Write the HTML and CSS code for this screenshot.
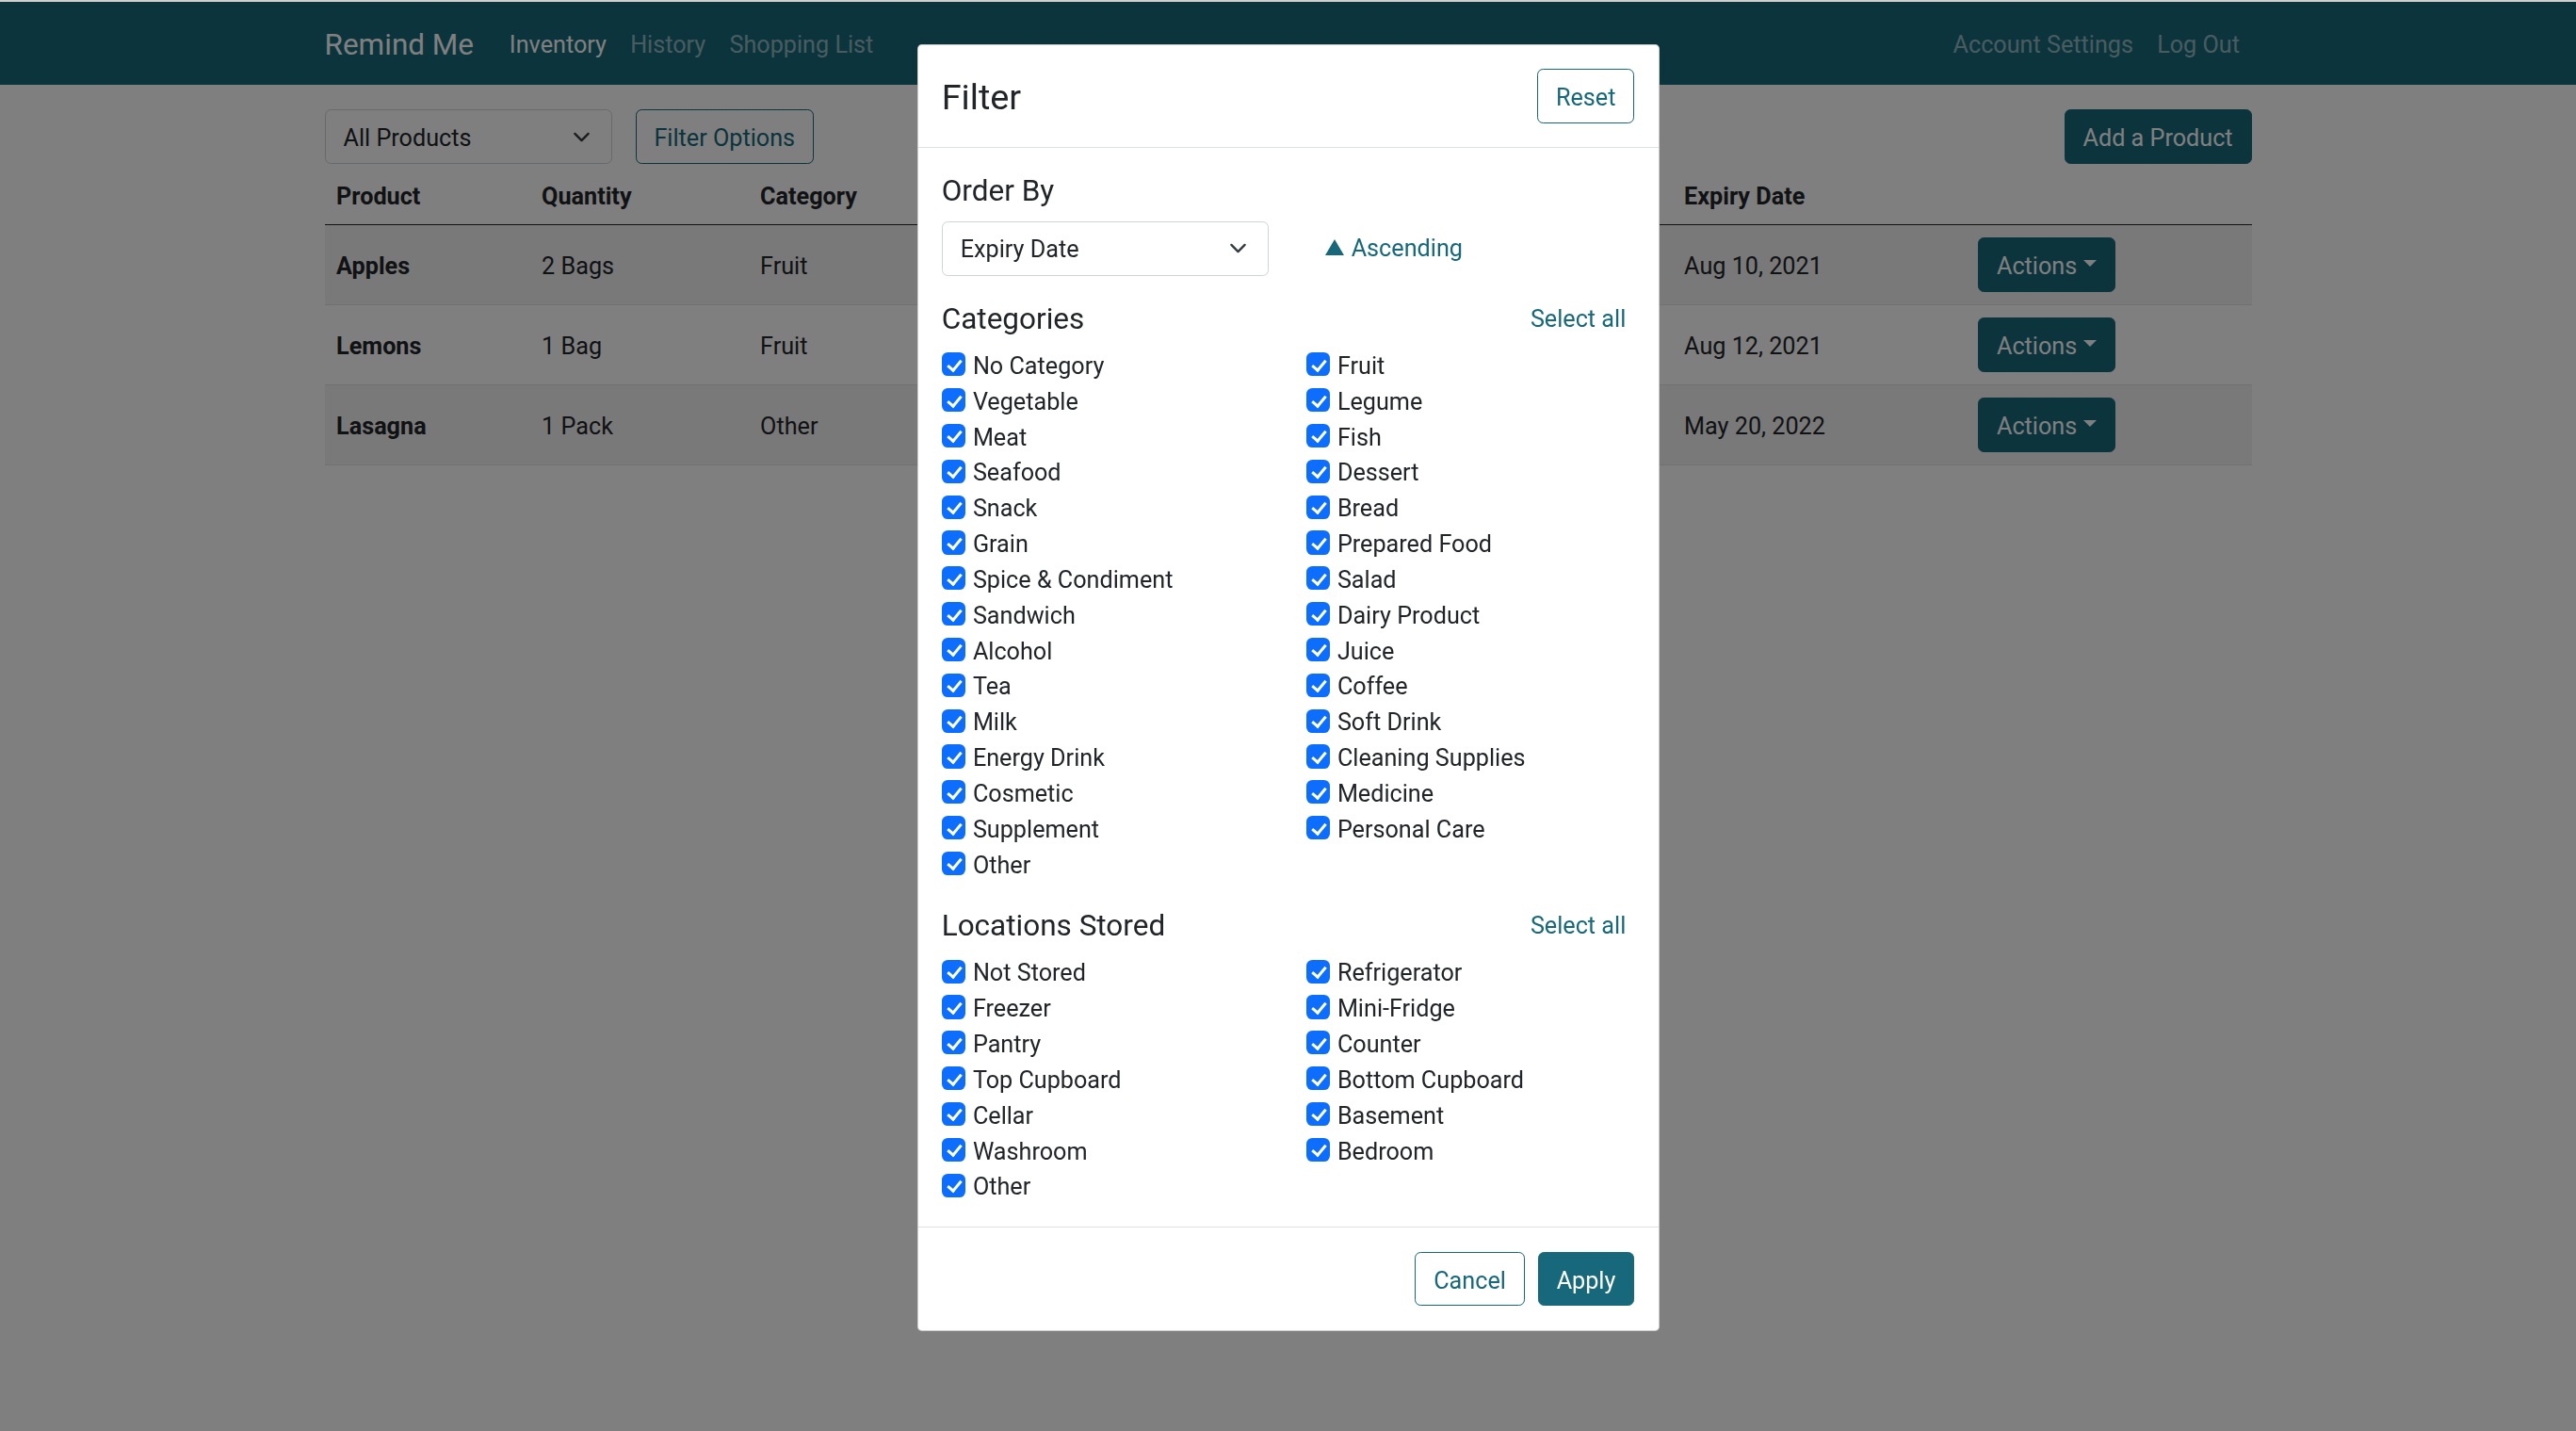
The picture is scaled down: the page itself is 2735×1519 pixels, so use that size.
FILE: index.html
```html
<!DOCTYPE html>
<html lang="en">
<head>
<meta charset="utf-8">
<title>Remind Me - Inventory</title>
<link rel="stylesheet" href="styles.css">
</head>
<body>
<nav class="navbar">
  <div class="container nav-inner">
    <a class="brand">Remind Me</a>
    <div class="nav-links">
      <a class="nav-link active">Inventory</a>
      <a class="nav-link">History</a>
      <a class="nav-link">Shopping List</a>
    </div>
    <div class="nav-links nav-right">
      <a class="nav-link">Account Settings</a>
      <a class="nav-link">Log Out</a>
    </div>
  </div>
</nav>

<main class="container">
  <div class="toolbar">
    <div class="select select-products">
      <span class="select-text">All Products</span>
      <svg class="chev" viewBox="0 0 16 16"><path d="M2 5l6 6 6-6" fill="none" stroke="#343a40" stroke-width="2" stroke-linecap="round" stroke-linejoin="round"/></svg>
    </div>
    <button class="btn btn-outline">Filter Options</button>
    <button class="btn btn-primary btn-add">Add a Product</button>
  </div>

  <table class="table">
    <thead>
      <tr>
        <th class="c-product">Product</th>
        <th class="c-qty">Quantity</th>
        <th class="c-cat">Category</th>
        <th class="c-loc">Location</th>
        <th class="c-added">Date Added</th>
        <th class="c-exp">Expiry Date</th>
        <th class="c-act"></th>
      </tr>
    </thead>
    <tbody>
      <tr>
        <td class="bold">Apples</td><td>2 Bags</td><td>Fruit</td><td>Refrigerator</td><td>Aug 1, 2021</td><td>Aug 10, 2021</td>
        <td><button class="btn btn-primary">Actions<span class="caret"></span></button></td>
      </tr>
      <tr>
        <td class="bold">Lemons</td><td>1 Bag</td><td>Fruit</td><td>Refrigerator</td><td>Aug 2, 2021</td><td>Aug 12, 2021</td>
        <td><button class="btn btn-primary">Actions<span class="caret"></span></button></td>
      </tr>
      <tr>
        <td class="bold">Lasagna</td><td>1 Pack</td><td>Other</td><td>Freezer</td><td>Aug 3, 2021</td><td>May 20, 2022</td>
        <td><button class="btn btn-primary">Actions<span class="caret"></span></button></td>
      </tr>
    </tbody>
  </table>
</main>

<div class="backdrop">
  <div class="modal">
    <div class="modal-header">
      <h4 class="modal-title">Filter</h4>
      <button class="btn btn-outline">Reset</button>
    </div>
    <div class="modal-body">
      <h5 class="section-title">Order By</h5>
      <div class="order-row">
        <div class="select select-order">
          <span class="select-text">Expiry Date</span>
          <svg class="chev" viewBox="0 0 16 16"><path d="M2 5l6 6 6-6" fill="none" stroke="#343a40" stroke-width="2" stroke-linecap="round" stroke-linejoin="round"/></svg>
        </div>
        <a class="asc"><svg class="tri" viewBox="0 0 20 17"><path d="M10 0L20 17H0z" fill="#16687a"/></svg>Ascending</a>
      </div>

      <div class="section-head section-head-first">
        <h5 class="section-title">Categories</h5>
        <a class="select-all">Select all</a>
      </div>
      <div class="checks">
        <div class="check-col">
          <label class="check"><span class="box"></span>No Category</label>
          <label class="check"><span class="box"></span>Vegetable</label>
          <label class="check"><span class="box"></span>Meat</label>
          <label class="check"><span class="box"></span>Seafood</label>
          <label class="check"><span class="box"></span>Snack</label>
          <label class="check"><span class="box"></span>Grain</label>
          <label class="check"><span class="box"></span>Spice &amp; Condiment</label>
          <label class="check"><span class="box"></span>Sandwich</label>
          <label class="check"><span class="box"></span>Alcohol</label>
          <label class="check"><span class="box"></span>Tea</label>
          <label class="check"><span class="box"></span>Milk</label>
          <label class="check"><span class="box"></span>Energy Drink</label>
          <label class="check"><span class="box"></span>Cosmetic</label>
          <label class="check"><span class="box"></span>Supplement</label>
          <label class="check"><span class="box"></span>Other</label>
        </div>
        <div class="check-col">
          <label class="check"><span class="box"></span>Fruit</label>
          <label class="check"><span class="box"></span>Legume</label>
          <label class="check"><span class="box"></span>Fish</label>
          <label class="check"><span class="box"></span>Dessert</label>
          <label class="check"><span class="box"></span>Bread</label>
          <label class="check"><span class="box"></span>Prepared Food</label>
          <label class="check"><span class="box"></span>Salad</label>
          <label class="check"><span class="box"></span>Dairy Product</label>
          <label class="check"><span class="box"></span>Juice</label>
          <label class="check"><span class="box"></span>Coffee</label>
          <label class="check"><span class="box"></span>Soft Drink</label>
          <label class="check"><span class="box"></span>Cleaning Supplies</label>
          <label class="check"><span class="box"></span>Medicine</label>
          <label class="check"><span class="box"></span>Personal Care</label>
        </div>
      </div>

      <div class="section-head">
        <h5 class="section-title">Locations Stored</h5>
        <a class="select-all">Select all</a>
      </div>
      <div class="checks">
        <div class="check-col">
          <label class="check"><span class="box"></span>Not Stored</label>
          <label class="check"><span class="box"></span>Freezer</label>
          <label class="check"><span class="box"></span>Pantry</label>
          <label class="check"><span class="box"></span>Top Cupboard</label>
          <label class="check"><span class="box"></span>Cellar</label>
          <label class="check"><span class="box"></span>Washroom</label>
          <label class="check"><span class="box"></span>Other</label>
        </div>
        <div class="check-col">
          <label class="check"><span class="box"></span>Refrigerator</label>
          <label class="check"><span class="box"></span>Mini-Fridge</label>
          <label class="check"><span class="box"></span>Counter</label>
          <label class="check"><span class="box"></span>Bottom Cupboard</label>
          <label class="check"><span class="box"></span>Basement</label>
          <label class="check"><span class="box"></span>Bedroom</label>
        </div>
      </div>
    </div>
    <div class="modal-footer">
      <button class="btn btn-outline">Cancel</button>
      <button class="btn btn-primary">Apply</button>
    </div>
  </div>
</div>
</body>
</html>
```

FILE: styles.css
```css
* { box-sizing: border-box; }

html, body { margin: 0; padding: 0; }

body {
  font-family: Roboto, "Liberation Sans", Arial, sans-serif;
  font-size: 25.2px;
  line-height: 1.5;
  color: #212529;
  background: #fff;
  border-top: 2px solid #cfcfcf;
}

.container {
  width: 2046px;
  margin: 0 auto;
}

/* Navbar */
.navbar {
  background: #16687a;
  height: 88px;
}
.nav-inner {
  display: flex;
  align-items: center;
  height: 100%;
  padding-top: 3px;
}
.brand {
  font-size: 31.5px;
  color: #fff;
  margin-right: 25.2px;
  line-height: 1.5;
}
.nav-links { display: flex; }
.nav-right { margin-left: auto; }
.nav-link {
  padding: 0 12.6px;
  color: rgba(255, 255, 255, 0.55);
}
.nav-link.active { color: #fff; }

/* Toolbar */
.toolbar {
  display: flex;
  align-items: center;
  gap: 25px;
  margin-top: 26px;
}
.select {
  display: flex;
  align-items: center;
  justify-content: space-between;
  height: 58px;
  border: 1px solid #ced4da;
  border-radius: 6.3px;
  background: #fff;
  padding: 0 19px;
  color: #212529;
}
.select-text { padding-top: 3px; }
.select-products { width: 305px; }
.chev { width: 25px; height: 19px; }

.btn {
  font-family: inherit;
  font-size: 25.2px;
  line-height: 1.5;
  padding: 11px 18.9px 7px;
  border: 1px solid #16687a;
  border-radius: 6.3px;
  cursor: pointer;
  display: inline-flex;
  align-items: center;
}
.btn-outline {
  background: transparent;
  color: #16687a;
}
.btn-primary {
  background: #16687a;
  color: #fff;
}
.btn-add { margin-left: auto; }

.caret {
  display: inline-block;
  margin-left: 6.4px;
  border-top: 7.5px solid #fff;
  border-left: 7.5px solid transparent;
  border-right: 7.5px solid transparent;
  transform: translateY(-3px);
}

/* Table */
.table {
  width: 100%;
  border-collapse: collapse;
  table-layout: fixed;
  margin-top: 1px;
}
.table th {
  text-align: left;
  font-weight: 700;
  padding: 14.6px 12.6px 10.6px;
  border-bottom: 1px solid #212529;
}
.table td {
  padding: 14.6px 12.6px 10.6px;
  height: 85px;
  vertical-align: middle;
  border-bottom: 1px solid #dee2e6;
}
.table td:last-child { padding-top: 12.6px; padding-bottom: 12.6px; }
.table td.bold { font-weight: 700; }
.table tbody tr:nth-child(odd) td { background: rgba(0, 0, 0, 0.05); }

.c-product { width: 218px; }
.c-qty { width: 232px; }
.c-cat { width: 245px; }
.c-loc { width: 368px; }
.c-added { width: 368px; }
.c-exp { width: 312px; }
.c-act { width: 303px; }

/* Modal */
.backdrop {
  position: fixed;
  top: 2px;
  left: 0;
  right: 0;
  bottom: 0;
  background: rgba(0, 0, 0, 0.5);
  display: flex;
  justify-content: center;
  align-items: flex-start;
}
.modal {
  width: 788px;
  margin-top: 45px;
  background: #fff;
  border: 1px solid rgba(0, 0, 0, 0.2);
  border-radius: 4.7px;
}
.modal-header {
  display: flex;
  align-items: center;
  justify-content: space-between;
  padding: 25.2px;
  border-bottom: 1px solid #dee2e6;
}
.modal-title {
  margin: 0;
  padding-top: 3px;
  font-size: 37.8px;
  font-weight: 400;
  line-height: 1.2;
}
.modal-body { padding: 27px 25.2px 25.2px; }

.section-title {
  margin: 0;
  font-size: 31.5px;
  font-weight: 400;
  line-height: 1.2;
}
.order-row {
  display: flex;
  align-items: center;
  margin-top: 12.6px;
}
.select-order { width: 347px; }
.asc {
  display: flex;
  align-items: center;
  gap: 8px;
  margin-left: 60px;
  color: #16687a;
}
.asc .tri { margin-top: -2px; }
.tri { width: 20px; height: 17px; }

.section-head {
  display: flex;
  align-items: center;
  justify-content: space-between;
  margin-top: 28.5px;
}
.section-head-first { margin-top: 27px; }
.select-all {
  color: #16687a;
  margin-right: 9px;
}

.checks {
  display: flex;
  margin-top: 10.5px;
}
.check-col {
  flex: none;
  width: 387px;
  display: flex;
  flex-direction: column;
}
.check-col + .check-col { width: auto; flex: 1; }
.check {
  display: flex;
  align-items: flex-start;
  gap: 8px;
  height: 37.85px;
  padding-top: 2px;
}
.box {
  position: relative;
  flex: none;
  width: 25.2px;
  height: 25.2px;
  margin-top: 4.3px;
  border-radius: 6.3px;
  background: #0d6efd;
}
.box::after {
  content: "";
  position: absolute;
  left: 9px;
  top: 4.5px;
  width: 6px;
  height: 12px;
  border: solid #fff;
  border-width: 0 3px 3px 0;
  transform: rotate(40deg);
}

.modal-footer {
  display: flex;
  justify-content: flex-end;
  gap: 14px;
  padding: 25.2px;
  border-top: 1px solid #dee2e6;
}
```
